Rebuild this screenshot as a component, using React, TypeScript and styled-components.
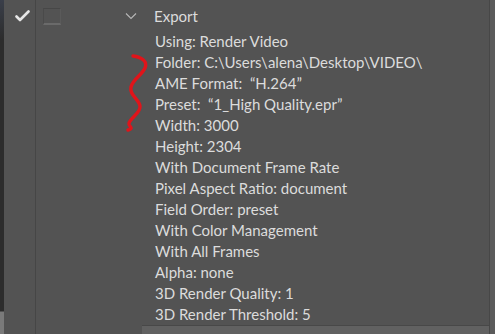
import React from "react";
import styled, { createGlobalStyle } from "styled-components";

const Global = createGlobalStyle`
  html, body { margin: 0; padding: 0; background: #535353; }
  body { font-family: Lato, "Liberation Sans", sans-serif; }
`;

const Frame = styled.div`
  position: relative;
  display: flex;
  width: 495px;
  height: 334px;
  overflow: hidden;
  background: #535353;
`;

const LeftEdge = styled.div`
  width: 4px;
  flex: none;
  background: linear-gradient(to bottom, #3a3f4a 0px, #2c2c2c 40px, #2c2c2c 311px, #7a7a7a 312px);
`;

const CheckColumn = styled.div`
  width: 32px;
  flex: none;
  border-right: 1px solid #464646;
  display: flex;
  justify-content: center;
  padding-top: 10px;
  padding-left: 6px;
  box-sizing: border-box;
  align-items: flex-start;
`;

const Tree = styled.div`
  flex: 1;
  display: flex;
  flex-direction: column;
  min-width: 0;
`;

const TopEdge = styled.div`
  height: 2px;
  margin-left: 106px;
  margin-top: -2px;
  background: #4b4b4b;
`;

const TopRow = styled.div`
  height: 32px;
  display: flex;
  align-items: flex-start;
  padding-left: 7px;
  box-sizing: border-box;
`;

const Box = styled.div`
  width: 18px;
  height: 17px;
  margin-top: 8px;
  border-top: 1px solid #474747;
  border-left: 1px solid #4a4a4a;
  border-right: 1px solid #5a5a5a;
  border-bottom: 2px solid #6a6a6a;
  box-sizing: border-box;
`;

const Chevron = styled.svg`
  margin-left: 64px;
  margin-top: 12px;
  flex: none;
`;

const Label = styled.div<{ $indent?: number }>`
  font-size: 15px;
  line-height: 21px;
  color: #dcdcdc;
  white-space: pre;
  padding-left: ${(p) => p.$indent ?? 0}px;
`;

const ExportLabel = styled(Label)`
  margin-left: 17px;
  padding-top: 6px;
`;

const Children = styled.div`
  display: flex;
  flex-direction: column;
`;

const BottomEdge = styled.div`
  margin-left: 106px;
  height: 8px;
  border-top: 1px solid #484848;
  background: #616161;
`;

const RightEdge = styled.div`
  width: 6px;
  flex: none;
  border-left: 1px solid #474747;
  background: #5b5b5b;
  box-sizing: border-box;
`;

const Squiggle = styled.svg`
  position: absolute;
  left: 0;
  top: 0;
  pointer-events: none;
`;

const items = [
  "Using: Render Video",
  "Folder: C:\\Users\\alena\\Desktop\\VIDEO\\",
  "AME Format:  \u201CH.264\u201D",
  "Preset:  \u201C1_High Quality.epr\u201D",
  "Width: 3000",
  "Height: 2304",
  "With Document Frame Rate",
  "Pixel Aspect Ratio: document",
  "Field Order: preset",
  "With Color Management",
  "With All Frames",
  "Alpha: none",
  "3D Render Quality: 1",
  "3D Render Threshold: 5",
];

export default function App() {
  return (
    <>
      <Global />
      <Frame>
        <LeftEdge />
        <CheckColumn>
          <svg width="15" height="12" viewBox="0 0 15 12">
            <path d="M1.5 6.5 L5 10 L13.5 1.5" fill="none" stroke="#e6e6e6" strokeWidth="2.6" strokeLinecap="round" strokeLinejoin="round" />
          </svg>
        </CheckColumn>
        <Tree>
          <TopEdge />
          <TopRow>
            <Box />
            <Chevron width="12" height="8" viewBox="0 0 12 8">
              <path d="M1 1.5 L6 6.5 L11 1.5" fill="none" stroke="#b8b8b8" strokeWidth="1.1" />
            </Chevron>
            <ExportLabel>Export</ExportLabel>
          </TopRow>
          <Children>
            {items.map((t) => (
              <Label key={t} $indent={119}>{t}</Label>
            ))}
          </Children>
          <BottomEdge />
        </Tree>
        <RightEdge />
        <Squiggle width="495" height="334" viewBox="0 0 495 334">
          <path
            d="M133 56 C141 57 148 61 145 68 C142 75 133 79 131 87 C129 95 139 99 140 106 C141 113 131 117 129 123 C128 127 135 128 128 130"
            fill="none"
            stroke="#e0141a"
            strokeWidth="3.4"
            strokeLinecap="round"
            strokeLinejoin="round"
          />
        </Squiggle>
      </Frame>
    </>
  );
}
